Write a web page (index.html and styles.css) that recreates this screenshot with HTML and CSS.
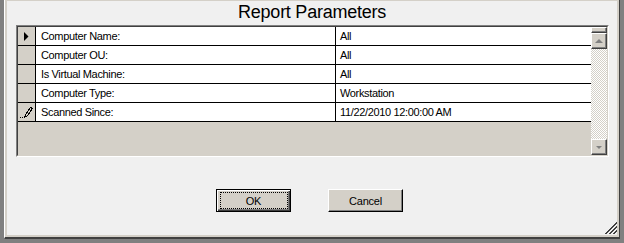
FILE: index.html
```html
<!DOCTYPE html>
<html lang="en">
<head>
    <meta charset="UTF-8">
    <title>Report Parameters</title>
    <link rel="stylesheet" href="styles.css">
</head>
<body>

    <div class="window">
        <div class="title">Report Parameters</div>

        <div class="grid">
            <div class="grid-inner">
                <div class="rows">
                    <div class="row">
                        <div class="hdr">
                            <svg width="17" height="18" viewBox="0 0 17 18"><path d="M6 5 L10.5 9.5 L6 14 Z" fill="#000"/></svg>
                        </div>
                        <div class="name">Computer Name:</div>
                        <div class="value">All</div>
                    </div>
                    <div class="row">
                        <div class="hdr"></div>
                        <div class="name">Computer OU:</div>
                        <div class="value">All</div>
                    </div>
                    <div class="row">
                        <div class="hdr"></div>
                        <div class="name">Is Virtual Machine:</div>
                        <div class="value">All</div>
                    </div>
                    <div class="row">
                        <div class="hdr"></div>
                        <div class="name">Computer Type:</div>
                        <div class="value">Workstation</div>
                    </div>
                    <div class="row">
                        <div class="hdr">
                            <svg width="17" height="18" viewBox="0 0 17 18" shape-rendering="crispEdges">
                                <rect x="2" y="14" width="1" height="1" fill="#000"/>
                                <rect x="4" y="14" width="1" height="1" fill="#000"/>
                                <path d="M6.5 14.5 L7.5 11.5 L12.5 4.5 L14.5 5.5 L9.5 12.5 Z" fill="none" stroke="#000" stroke-width="1"/>
                            </svg>
                        </div>
                        <div class="name">Scanned Since:</div>
                        <div class="value">11/22/2010 12:00:00 AM</div>
                    </div>
                </div>

                <div class="scrollbar">
                    <div class="sb-cap"></div>
                    <div class="sb-btn">
                        <svg width="14" height="14" viewBox="0 0 14 14"><path d="M3 9 L7 5 L11 9 Z" fill="#808080"/></svg>
                    </div>
                    <div class="sb-track"></div>
                    <div class="sb-btn">
                        <svg width="14" height="14" viewBox="0 0 14 14"><path d="M4 6 L10 6 L7 9 Z" fill="#808080"/></svg>
                    </div>
                </div>
            </div>
        </div>

        <div class="actions">
            <button class="btn btn-default">OK</button>
            <button class="btn">Cancel</button>
        </div>

        <svg class="grip" width="14" height="14" viewBox="0 0 14 14" shape-rendering="crispEdges">
            <path d="M13 1 L1 13 M13 2 L2 13" stroke="#404040" stroke-width="1"/>
            <path d="M13 5 L5 13 M13 6 L6 13" stroke="#404040" stroke-width="1"/>
            <path d="M13 9 L9 13 M13 10 L10 13" stroke="#404040" stroke-width="1"/>
        </svg>
    </div>

</body>
</html>
```

FILE: styles.css
```css
:root {
    --face: #d4d0c8;
    --window-bg: #f0f0f0;
    --shadow: #808080;
    --dark-shadow: #404040;
    --highlight: #ffffff;
}

body {
    margin: 0;
    background: var(--shadow);
    font-family: 'Liberation Sans', Arial, sans-serif;
    color: #000;
}

.window {
    position: relative;
    width: 616px;
    height: 239px;
    margin-left: 4px;
    box-sizing: border-box;
    background: var(--window-bg);
    border-left: 1px solid var(--highlight);
    border-right: 1px solid var(--dark-shadow);
    border-bottom: 2px solid var(--dark-shadow);
    box-shadow: inset 2px 0 var(--face), inset -2px 0 var(--face),
                inset 0 -2px var(--face), inset 0 1px var(--face);
}

.title {
    height: 25px;
    padding-top: 1px;
    box-sizing: border-box;
    line-height: 22px;
    font-size: 18px;
    letter-spacing: -0.25px;
    text-align: center;
}

/* -- grid -- */
.grid {
    margin-left: 11px;
    width: 593px;
    height: 132px;
    box-sizing: border-box;
    border: 1px solid;
    border-color: var(--shadow) var(--highlight) var(--highlight) var(--shadow);
}

.grid-inner {
    display: flex;
    height: 100%;
    box-sizing: border-box;
    border: 1px solid;
    border-color: var(--dark-shadow) var(--face) var(--face) var(--dark-shadow);
    background: var(--face);
}

.rows {
    width: 573px;
}

.row {
    display: flex;
    height: 19px;
    box-sizing: border-box;
    border-bottom: 1px solid #000;
    font-size: 11px;
    line-height: 18px;
    letter-spacing: -0.35px;
}

.hdr {
    width: 18px;
    box-sizing: border-box;
    border-right: 1px solid #000;
    background: var(--face);
}

.hdr svg {
    display: block;
}

.name {
    width: 300px;
    box-sizing: border-box;
    padding-left: 5px;
    border-right: 1px solid #000;
    background: #fff;
    white-space: nowrap;
}

.value {
    flex: 1;
    padding-left: 4px;
    background: #fff;
    white-space: nowrap;
}

/* -- scrollbar -- */
.scrollbar {
    width: 16px;
    display: flex;
    flex-direction: column;
}

.sb-cap,
.sb-btn {
    box-sizing: border-box;
    border: 1px solid;
    border-color: var(--highlight) var(--dark-shadow) var(--dark-shadow) var(--highlight);
    box-shadow: inset -1px -1px var(--shadow);
    background: var(--face);
}

.sb-cap {
    height: 6px;
}

.sb-btn {
    height: 16px;
}

.sb-btn svg {
    display: block;
}

.sb-track {
    flex: 1;
    background: repeating-conic-gradient(#fff 0 25%, var(--face) 0 50%) 0 0 / 2px 2px;
}

/* -- buttons -- */
.actions {
    display: flex;
    gap: 37px;
    margin-top: 32px;
    padding-left: 211px;
}

.btn {
    position: relative;
    width: 75px;
    height: 23px;
    padding: 0;
    box-sizing: border-box;
    background: var(--face);
    font-family: 'Liberation Sans', Arial, sans-serif;
    font-size: 11px;
    letter-spacing: -0.2px;
    color: #000;
    border: 1px solid;
    border-color: var(--highlight) #000 #000 var(--highlight);
    box-shadow: inset -1px -1px var(--shadow);
}

.btn-default {
    border-color: #000;
    box-shadow: inset 1px 1px var(--highlight), inset -1px -1px var(--dark-shadow),
                inset -2px -2px var(--shadow);
}

.btn-default::after {
    content: '';
    position: absolute;
    left: 3px;
    top: 2px;
    right: 2px;
    bottom: 2px;
    border: 1px dotted #000;
}

.grip {
    position: absolute;
    right: 1px;
    bottom: 2px;
}
```
